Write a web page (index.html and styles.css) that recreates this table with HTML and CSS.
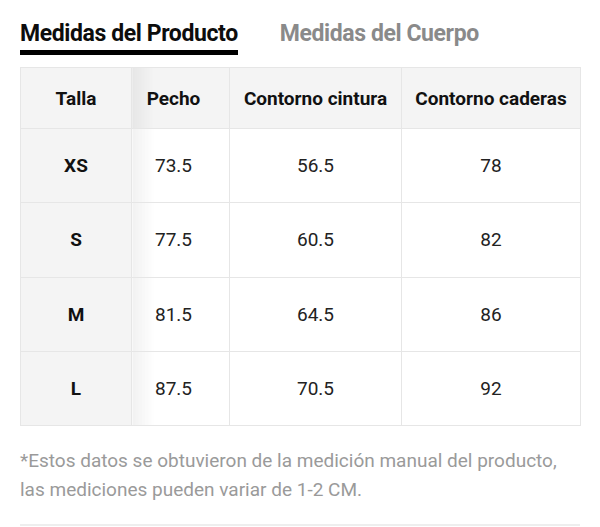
FILE: index.html
```html
<!DOCTYPE html>
<html lang="es">
<head>
<meta charset="utf-8">
<link rel="stylesheet" href="styles.css">
</head>
<body>
<div class="page">
  <div class="tabs">
    <div class="tab active">Medidas del Producto</div>
    <div class="tab">Medidas del Cuerpo</div>
  </div>
  <table class="size-table">
    <colgroup>
      <col class="c1"><col class="c2"><col class="c3"><col class="c4">
    </colgroup>
    <thead>
      <tr>
        <th class="first">Talla</th>
        <th class="second">Pecho</th>
        <th>Contorno cintura</th>
        <th>Contorno caderas</th>
      </tr>
    </thead>
    <tbody>
      <tr><td class="first">XS</td><td class="second">73.5</td><td>56.5</td><td>78</td></tr>
      <tr><td class="first">S</td><td class="second">77.5</td><td>60.5</td><td>82</td></tr>
      <tr><td class="first">M</td><td class="second">81.5</td><td>64.5</td><td>86</td></tr>
      <tr><td class="first">L</td><td class="second">87.5</td><td>70.5</td><td>92</td></tr>
    </tbody>
  </table>
  <p class="note">*Estos datos se obtuvieron de la medición manual del producto, las mediciones pueden variar de 1-2 CM.</p>
  <div class="divider"></div>
</div>
</body>
</html>
```

FILE: styles.css
```css
* { box-sizing: border-box; }
html, body { margin: 0; padding: 0; background: #fff; }
body {
  font-family: Roboto, "Noto Sans", "Liberation Sans", sans-serif;
  color: #111;
}
.page {
  padding: 20px 20px 0 20px;
  width: 600px;
}
.tabs {
  display: flex;
  gap: 42px;
}
.tab {
  font-size: 23px;
  line-height: 28px;
  font-weight: 700;
  letter-spacing: -0.4px;
  color: #8a8a8a;
  padding-bottom: 2px;
  border-bottom: 5px solid transparent;
}
.tab.active {
  color: #0d0d0d;
  border-bottom-color: #000;
}
.size-table {
  margin-top: 12px;
  width: 560px;
  border-collapse: collapse;
  table-layout: fixed;
  border: 1px solid #e6e6e6;
}
.c1 { width: 111px; }
.c2 { width: 98px; }
.c3 { width: 172px; }
.c4 { width: 179px; }
.size-table th,
.size-table td {
  border: 1px solid #e6e6e6;
  text-align: center;
  vertical-align: middle;
  padding: 0;
}
.size-table th {
  height: 61px;
  background: #f4f4f4;
  font-size: 19px;
  font-weight: 700;
  color: #111;
}
.size-table td {
  height: 74.3px;
  font-size: 19px;
  font-weight: 400;
  color: #222;
}
.size-table td.first {
  background: #f4f4f4;
  font-weight: 700;
  color: #111;
}
.size-table .second {
  padding-right: 14px;
  background-image: linear-gradient(to right, rgba(0,0,0,0.055), rgba(0,0,0,0) 22px);
}
.note {
  margin: 20px 0 0 0;
  font-size: 19px;
  line-height: 29px;
  color: #9a9a9a;
}
.divider {
  margin-top: 20px;
  height: 2px;
  background: #eeeeee;
}
```
